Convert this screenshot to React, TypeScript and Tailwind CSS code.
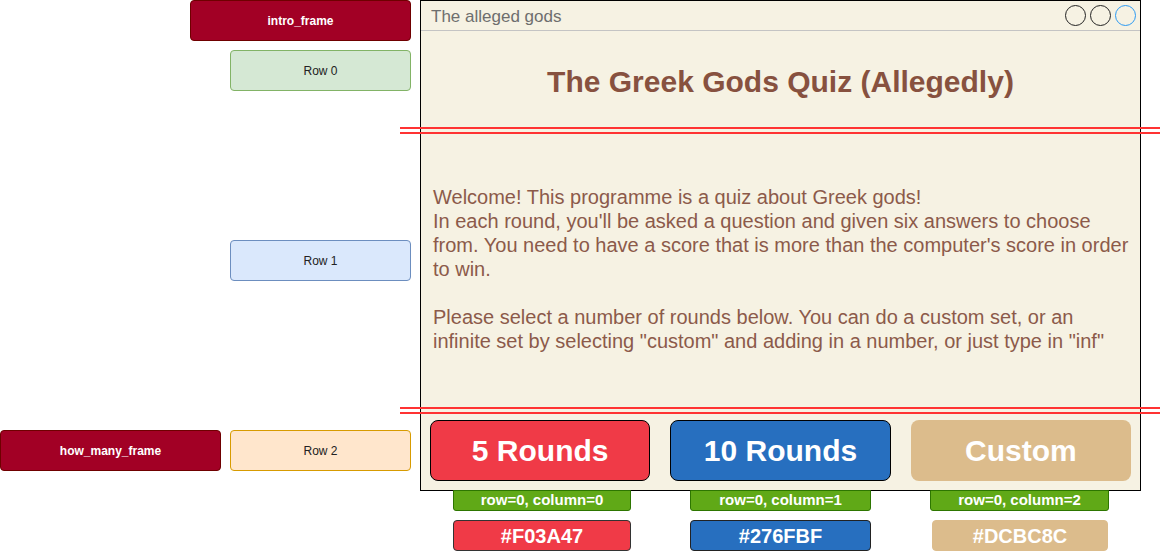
import React from 'react';

const FONT = { fontFamily: '"Liberation Sans", Arial, Helvetica, sans-serif' };

// Diagram labels on the left of the canvas
const labels = [
    { text: 'intro_frame', cls: 'left-[190px] top-0 w-[221px] bg-[#a20025] border-[#6f0000] text-white font-bold' },
    { text: 'Row 0', cls: 'left-[230px] top-[50px] w-[181px] bg-[#d5e8d4] border-[#82b366] text-[#222]' },
    { text: 'Row 1', cls: 'left-[230px] top-[240px] w-[181px] bg-[#dae8fc] border-[#6c8ebf] text-[#222]' },
    { text: 'how_many_frame', cls: 'left-0 top-[430px] w-[221px] bg-[#a20025] border-[#6f0000] text-white font-bold' },
    { text: 'Row 2', cls: 'left-[230px] top-[430px] w-[181px] bg-[#ffe6cc] border-[#d79b00] text-[#222]' },
];

const buttons = [
    { text: '5 Rounds', cls: 'bg-[#f03a47] border border-black' },
    { text: '10 Rounds', cls: 'bg-[#276fbf] border border-black' },
    { text: 'Custom', cls: 'bg-[#dcbc8c]' },
];

const tags = [
    { pos: 'row=0, column=0', hex: '#F03A47', col: 'w-[178px]', hexCls: 'w-[178px] bg-[#f03a47] border border-[#333]' },
    { pos: 'row=0, column=1', hex: '#276FBF', col: 'w-[181px]', hexCls: 'w-[181px] bg-[#276fbf] border border-[#222]' },
    { pos: 'row=0, column=2', hex: '#DCBC8C', col: 'w-[179px]', hexCls: 'w-[176px] ml-[2px] bg-[#dcbc8c] border border-[#dcbc8c]' },
];

const App: React.FC = () => {
    return (
        <div className="relative w-[1162px] h-[551px] bg-white overflow-hidden" style={FONT}>
            {labels.map(l => (
                <div key={l.text} className={`absolute h-[41px] rounded-[4px] border flex items-center justify-center text-[12px] ${l.cls}`}>
                    {l.text}
                </div>
            ))}

            {/* Window mockup + grid annotations */}
            <div className="absolute left-[420px] top-0 w-[721px] flex flex-col">
                <div className="h-[491px] border border-black bg-[#f6f2e3] flex flex-col">
                    {/* Title bar */}
                    <div className="h-[30px] border-b border-[#c4c4c4] flex items-center justify-between pl-[10px] pr-[4px]">
                        <span className="text-[17px] text-[#6e6e6e] mt-[2px]">The alleged gods</span>
                        <div className="flex gap-[4px]">
                            <span className="w-[21px] h-[21px] rounded-full border border-[#222]"></span>
                            <span className="w-[21px] h-[21px] rounded-full border border-[#222]"></span>
                            <span className="w-[21px] h-[21px] rounded-full border border-[#2b9af3]"></span>
                        </div>
                    </div>

                    {/* Row 0 */}
                    <div className="h-[97px] flex items-center justify-center pt-[3px]">
                        <h1 className="text-[30px] font-bold text-[#87513f]">The Greek Gods Quiz (Allegedly)</h1>
                    </div>

                    {/* Row 1 */}
                    <div className="h-[282px] flex items-center pl-[12px] pr-[10px]">
                        <p className="text-[20px] leading-[24px] text-[#8c5a4a]">
                            Welcome! This programme is a quiz about Greek gods!<br />
                            In each round, you'll be asked a question and given six answers to choose from. You need to have a score that is more than the computer's score in order to win.<br />
                            <br />
                            Please select a number of rounds below. You can do a custom set, or an infinite set by selecting "custom" and adding in a number, or just type in "inf"
                        </p>
                    </div>

                    {/* Row 2 */}
                    <div className="flex-1 flex items-center gap-[20px] px-[9px]">
                        {buttons.map(b => (
                            <div key={b.text} className={`w-[221px] h-[61px] rounded-[8px] flex items-center justify-center text-white font-bold text-[30px] ${b.cls}`}>
                                {b.text}
                            </div>
                        ))}
                    </div>
                </div>

                <div className="flex pl-[33px] gap-[59px]">
                    {tags.map(t => (
                        <div key={t.hex} className={`flex flex-col ${t.col}`}>
                            <div className="w-full h-[21px] -mt-px bg-[#60a917] border border-[#2d7600] rounded-b-[3px] flex items-center justify-center text-white font-bold text-[15px]">
                                {t.pos}
                            </div>
                            <div className={`mt-[9px] h-[31px] rounded-[4px] flex items-center justify-center text-white font-bold text-[20px] ${t.hexCls}`}>
                                {t.hex}
                            </div>
                        </div>
                    ))}
                </div>
            </div>

            {/* Red row separators */}
            <div className="absolute left-[400px] top-[127px] w-[760px] h-[2px] bg-[#ff3333]"></div>
            <div className="absolute left-[400px] top-[132px] w-[760px] h-[2px] bg-[#ff3333]"></div>
            <div className="absolute left-[400px] top-[407px] w-[760px] h-[2px] bg-[#ff3333]"></div>
            <div className="absolute left-[400px] top-[412px] w-[760px] h-[2px] bg-[#ff3333]"></div>
        </div>
    );
};

export default App;
